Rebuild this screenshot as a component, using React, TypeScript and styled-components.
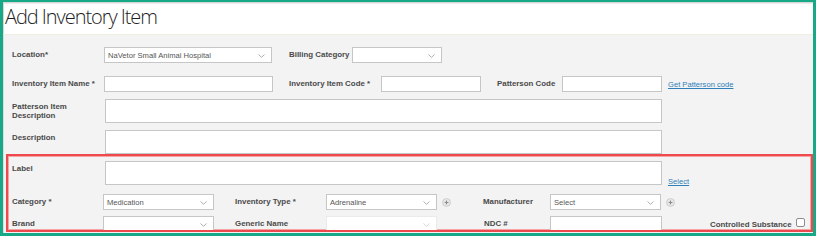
import React from 'react';
import styled, { createGlobalStyle } from 'styled-components';

const GlobalStyle = createGlobalStyle`
  html, body {
    margin: 0;
    padding: 0;
    background: #ffffff;
  }
  * {
    box-sizing: border-box;
  }
`;

/* small parts ------------- */
const Chevron: React.FC = () => (
  <svg width="7" height="4" viewBox="0 0 7 4">
    <path d="M0.5 0.5 L3.5 3.3 L6.5 0.5" fill="none" stroke="#9a9a9a" strokeWidth="0.8" />
  </svg>
);

const AddIcon: React.FC = () => (
  <AddCircle>
    <svg width="9" height="9" viewBox="0 0 9 9">
      <circle cx="4.5" cy="4.5" r="4" fill="#e6e6e6" stroke="#c9c9c9" strokeWidth="0.8" />
      <path d="M4.5 2.6 V6.4 M2.6 4.5 H6.4" stroke="#8a8a8a" strokeWidth="1" />
    </svg>
  </AddCircle>
);

const Select: React.FC<{ w: number; value?: string; disabled?: boolean }> = ({
  w,
  value,
  disabled,
}) => (
  <SelectBox w={w} disabled={disabled}>
    <span>{value}</span>
    <Chevron />
  </SelectBox>
);
/* ------------- */

const App: React.FC = () => (
  <>
    <GlobalStyle />
    <Frame>
      <TitleBar>
        <Title>Add Inventory Item</Title>
      </TitleBar>
      <Form>
        <Row mb={13}>
          <Label w={92}>Location*</Label>
          <Select w={168} value="NaVetor Small Animal Hospital" />
          <Label w={63} ml={17}>
            Billing Category
          </Label>
          <Select w={90} />
        </Row>
        <Row mb={7}>
          <Label w={92}>Inventory Item Name *</Label>
          <TextBox w={169} />
          <Label w={92} ml={16}>
            Inventory Item Code *
          </Label>
          <TextBox w={100} />
          <Label w={65} ml={16}>
            Patterson Code
          </Label>
          <TextBox w={100} />
          <Link ml={6}>Get Patterson code</Link>
        </Row>
        <Row mb={7}>
          <Label w={93}>
            Patterson Item
            <br />
            Description
          </Label>
          <TextArea w={557} />
        </Row>
        <Row>
          <Label w={93}>Description</Label>
          <TextArea w={557} />
        </Row>
        <Highlight>
          <Row mb={8} pl={4}>
            <Label w={93}>Label</Label>
            <TextArea w={557} />
            <Link ml={6} mt={16}>
              Select
            </Link>
          </Row>
          <Row mb={6} pl={4}>
            <Label w={91}>Category *</Label>
            <Select w={111} value="Medication" />
            <Label w={91} ml={21}>
              Inventory Type *
            </Label>
            <Select w={111} value="Adrenaline" />
            <AddIcon />
            <Label w={67} ml={32}>
              Manufacturer
            </Label>
            <Select w={111} value="Select" />
            <AddIcon />
          </Row>
          <Row pl={4}>
            <Label w={91}>Brand</Label>
            <Select w={111} />
            <Label w={91} ml={21}>
              Generic Name
            </Label>
            <Select w={111} disabled />
            <Label w={66} ml={47}>
              NDC #
            </Label>
            <TextBox w={112} />
            <Label w={88} ml={48} pt={4}>
              Controlled Substance
            </Label>
            <CheckBox />
          </Row>
        </Highlight>
      </Form>
    </Frame>
  </>
);

const Frame = styled.div`
  width: 816px;
  height: 236px;
  overflow: hidden;
  border-style: solid;
  border-color: #17a888;
  border-width: 2px 3px 3px 3px;
  background: #f3f3f3;
  display: flex;
  flex-direction: column;
`;
const TitleBar = styled.div`
  height: 33px;
  background: #ffffff;
  border-bottom: 1px solid #efeee2;
  box-shadow: inset 1px 1px 0 #d6d6d6, inset 0 2px 0 #ececec;
  padding: 2px 0 0 2px;
`;
const Title = styled.h1`
  margin: 0;
  font-family: 'Open Sans', 'Liberation Sans', sans-serif;
  font-weight: 300;
  font-size: 20px;
  line-height: 25px;
  color: #1e1e1e;
  letter-spacing: -1.05px;
`;
const Form = styled.div`
  flex: 1;
  padding: 12px 0 0 3px;
  font-family: 'Liberation Sans', Arial, sans-serif;
  box-shadow: inset 1px 0 0 #dcdcdc;
`;
const Row = styled.div<{ mb?: number; pl?: number }>`
  display: flex;
  align-items: flex-start;
  padding-left: ${(p) => p.pl ?? 6}px;
  margin-bottom: ${(p) => p.mb ?? 0}px;
`;
const Label = styled.div<{ w: number; ml?: number; pt?: number }>`
  width: ${(p) => p.w}px;
  margin-left: ${(p) => p.ml ?? 0}px;
  padding-top: ${(p) => p.pt ?? 3}px;
  flex-shrink: 0;
  font-size: 7.9px;
  line-height: 9px;
  font-weight: bold;
  color: #4a4a4a;
  white-space: nowrap;
`;
const fieldBase = `
  flex-shrink: 0;
  background: #ffffff;
  border: 1px solid #c6c6c6;
`;
const TextBox = styled.div<{ w: number }>`
  ${fieldBase}
  width: ${(p) => p.w}px;
  height: 16px;
`;
const TextArea = styled.div<{ w: number }>`
  ${fieldBase}
  width: ${(p) => p.w}px;
  height: 24px;
`;
const SelectBox = styled.div<{ w: number; disabled?: boolean }>`
  ${fieldBase}
  width: ${(p) => p.w}px;
  height: 16px;
  display: flex;
  align-items: center;
  justify-content: space-between;
  padding: 0 6px 0 3px;
  border-color: ${(p) => (p.disabled ? '#ebebeb' : '#c6c6c6')};
  font-size: 7.6px;
  color: #555555;
  svg {
    margin-top: 2px;
    opacity: ${(p) => (p.disabled ? 0.5 : 1)};
  }
`;
const Link = styled.span<{ ml?: number; mt?: number }>`
  margin-left: ${(p) => p.ml ?? 0}px;
  margin-top: ${(p) => p.mt ?? 4}px;
  font-size: 7.6px;
  color: #2f7fb8;
  text-decoration: underline;
  white-space: nowrap;
`;
const AddCircle = styled.span`
  display: flex;
  margin: 4px 0 0 5px;
`;
const Highlight = styled.div`
  height: 78px;
  overflow: hidden;
  border: 2px solid #ec4a4f;
  box-shadow: inset 0 0 0 1px #f6a3a5;
  padding: 5px 0 0 0;
`;
const CheckBox = styled.span`
  width: 9px;
  height: 9px;
  margin: 2px 0 0 -2px;
  border: 1px solid #8c8c8c;
  border-radius: 2px;
  background: #ffffff;
`;

export default App;
